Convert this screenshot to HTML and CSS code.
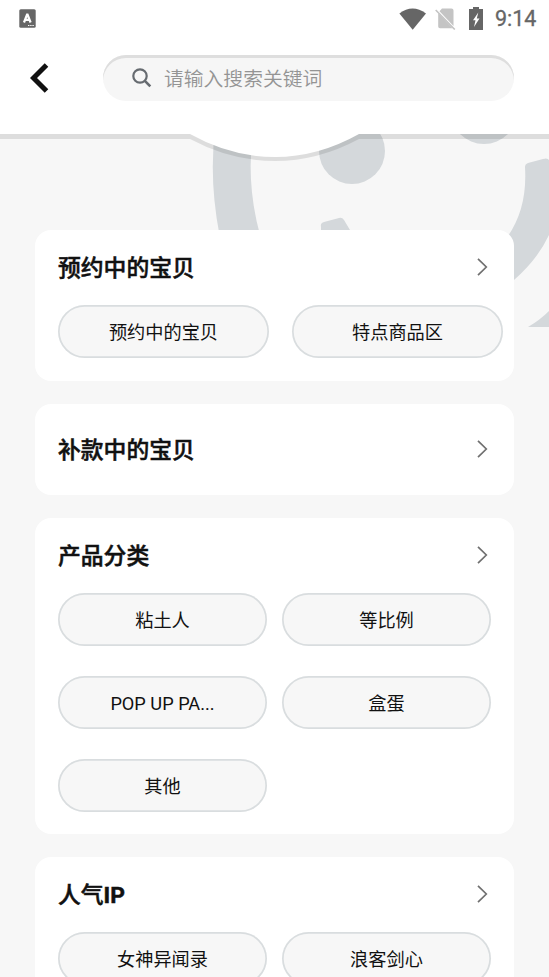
FILE: index.html
```html
<!DOCTYPE html>
<html lang="zh-CN">
<head>
<meta charset="utf-8">
<title>分类</title>
<link rel="stylesheet" href="styles.css">
</head>
<body>
<div class="page">
  <svg class="backdrop" viewBox="0 0 549 340" aria-hidden="true">
    <g fill="#d4d8db">
      <path d="M215.500 125Q208.500 178 219.500 235L260 235Q245 180 254 125Z"/>
      <circle cx="352" cy="151" r="33"/>
      <circle cx="484" cy="110.500" r="33.500"/>
      <path d="M321 235V227Q320 223 324 222L339 218Q342 217 344 220L353 235Z"/>
      <path d="M525 167Q525 164 528 163L543 159Q549 157 549.500 162V234Q538 259 514 280L500 290V246Q528 215 525 167Z"/>
      <path d="M528 327Q540 320 549 311V327Z"/>
    </g>
    <path fill="#000" fill-opacity=".1" d="M0 134H549V139H359Q318 161 275 161Q231 161 190 139H0Z"/>
    <path fill="#fff" d="M0 0H549V134H359Q318 157 275 157Q231 157 190 134H0Z"/>
  </svg>
  <header class="header">
    <div class="status">
      <svg class="status-app" width="17" height="19" viewBox="0 0 17 19"><rect x=".3" y=".3" width="16.400" height="18.400" rx="1.500" fill="#666"/><path d="M5 13.500 8.300 5 11.600 13.500M6 10.800h4.600" fill="none" stroke="#fff" stroke-width="2.200" stroke-linejoin="bevel"/><path d="M9 16.500h6" stroke="#fff" stroke-width="1.200" stroke-dasharray="1.400 .8"/></svg>
      <svg class="wifi" width="28" height="22" viewBox="0 0 28 22"><path d="M.4 5.500Q13.500-4.500 27 5.500L13.700 21.800Z" fill="#666"/></svg>
      <svg class="sim" width="21" height="22" viewBox="0 0 21 22"><path d="M7 .5H16.500Q18.500 .5 18.500 2.500V18L4.500 3.200ZM3.200 5 17.500 20.300H5Q3.200 20.300 3.200 18.500Z" fill="#c4c4c4"/><path d="M.7 2 19.800 21.500" stroke="#c4c4c4" stroke-width="1.600"/></svg>
      <svg class="battery" width="14" height="23" viewBox="0 0 14 23"><path d="M4 0H10V2H14V23H0V2H4Z" fill="#666"/><path d="M9.300 5.500 4 13.200H6.500L5 20 10.500 11.600H7.800Z" fill="#fff"/></svg>
      <span class="time">9:14</span>
    </div>
    <div class="toolbar">
      <svg class="back" width="19" height="30" viewBox="0 0 19 30"><path d="M16.500 2 3.500 15 16.500 28" fill="none" stroke="#111" stroke-width="5"/></svg>
      <div class="search">
        <svg width="20" height="20" viewBox="0 0 20 20" fill="none" stroke="#666b70"><circle cx="8" cy="8" r="6.700" stroke-width="2.200"/><path d="M12.600 12.600 18.300 18.300" stroke-width="2.600"/></svg>
        <span>请输入搜索关键词</span>
      </div>
    </div>
  </header>
  <main class="sections">
    <section class="card wide">
      <div class="card-head"><h2>预约中的宝贝</h2><svg class="chevron" viewBox="0 0 11 20"><path d="M1 1.800 9.300 10 1 18.200"/></svg></div>
      <div class="tags"><span class="tag">预约中的宝贝</span><span class="tag">特点商品区</span></div>
    </section>
    <section class="card single">
      <div class="card-head"><h2>补款中的宝贝</h2><svg class="chevron" viewBox="0 0 11 20"><path d="M1 1.800 9.300 10 1 18.200"/></svg></div>
    </section>
    <section class="card">
      <div class="card-head"><h2>产品分类</h2><svg class="chevron" viewBox="0 0 11 20"><path d="M1 1.800 9.300 10 1 18.200"/></svg></div>
      <div class="tags"><span class="tag">粘土人</span><span class="tag">等比例</span><span class="tag latin">POP UP PA...</span><span class="tag">盒蛋</span><span class="tag">其他</span></div>
    </section>
    <section class="card">
      <div class="card-head"><h2>人气<b>IP</b></h2><svg class="chevron" viewBox="0 0 11 20"><path d="M1 1.800 9.300 10 1 18.200"/></svg></div>
      <div class="tags"><span class="tag">女神异闻录</span><span class="tag">浪客剑心</span></div>
    </section>
  </main>
</div>
</body>
</html>
```
FILE: styles.css
```css
* { box-sizing: border-box; }
body {
  margin: 0;
  background: #f7f7f7;
  color: #111;
  font-family: Roboto, "Noto Sans CJK SC", sans-serif;
}
.page {
  position: relative;
  width: 549px;
  height: 977px;
  overflow: hidden;
}
.backdrop {
  position: absolute;
  top: 0;
  left: 0;
  width: 549px;
  height: 340px;
}
.header {
  position: relative;
  height: 230px;
}
.status {
  display: flex;
  align-items: center;
  height: 37px;
  padding: 0 12px 0 19px;
}
.wifi { margin-left: auto; }
.sim { margin-left: 8px; }
.battery { margin-left: 13px; }
.time {
  width: 42px;
  margin-left: 12px;
  color: #666;
  font-size: 21.500px;
  font-weight: 400;
  line-height: 37px;
  -webkit-text-stroke: .3px #666;
}
.toolbar {
  display: flex;
  align-items: center;
  height: 46px;
  margin-top: 18px;
  padding: 0 35px 0 30px;
}
.search {
  display: flex;
  align-items: center;
  flex: 1;
  gap: 12px;
  height: 46px;
  margin-left: 54px;
  padding: 0 0 1px 29px;
  border-radius: 23px;
  background: #f6f6f6;
  box-shadow: inset 0 3px 0 #dedede;
  color: #949494;
  font-size: 19.800px;
  font-weight: 350;
}
.sections {
  position: relative;
  display: flex;
  flex-direction: column;
  gap: 23px;
  padding: 0 35px;
}
.card {
  padding: 0 23px 22px;
  border-radius: 16px;
  background: #fff;
}
.wide { padding-bottom: 23px; }
.card-head {
  display: flex;
  align-items: center;
  justify-content: space-between;
  height: 75.500px;
  padding-right: 3px;
}
.wide .card-head { height: 75px; }
.card h2 {
  margin: 0;
  padding-top: 3px;
  font-size: 22.800px;
  font-weight: 500;
  line-height: 34px;
  -webkit-text-stroke: .5px #111;
}
.card h2 b { font-weight: 700; }
.chevron {
  width: 11px;
  height: 20px;
  margin-top: -1px;
  fill: none;
  stroke: #707070;
  stroke-width: 1.700;
}
.single { padding-bottom: 0; }
.single .card-head { height: 91px; }
.tags {
  display: grid;
  grid-template-columns: 209px 209px;
  gap: 30.500px 15px;
}
.wide .tags {
  grid-template-columns: 211px 211px;
  column-gap: 23px;
}
.tag {
  display: flex;
  align-items: center;
  justify-content: center;
  height: 52.500px;
  border-radius: 27px;
  background: #f7f7f7;
  box-shadow: inset 0 0 0 1.700px #d9dddf;
  font-size: 18.200px;
}
.latin { padding-top: 2px; }
```
